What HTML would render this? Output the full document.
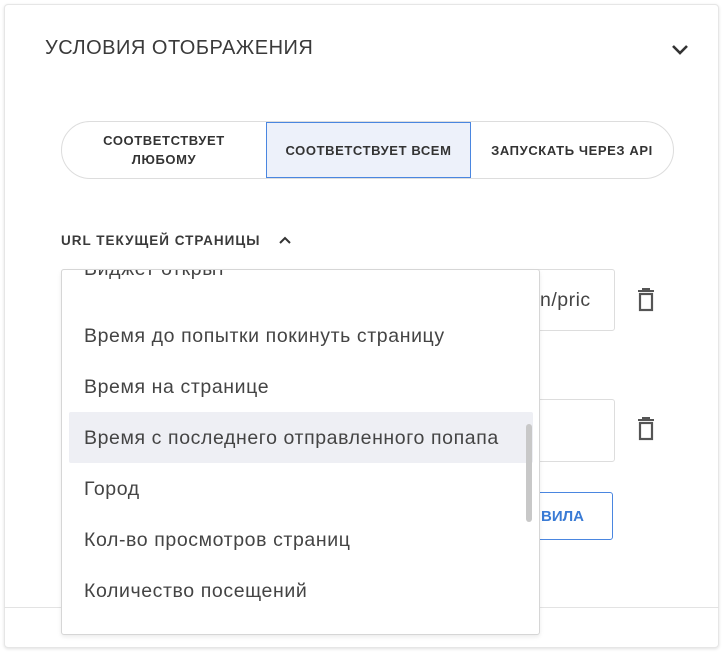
<!DOCTYPE html>
<html><head><meta charset="utf-8"><style>
*{box-sizing:border-box;margin:0;padding:0}
body{width:724px;height:653px;background:#fff;font-family:"Liberation Sans","DejaVu Sans",sans-serif;position:relative;overflow:hidden;color:#333}
.card{position:absolute;left:4px;top:4px;width:715px;height:644px;border:1px solid #e6e6e6;border-radius:4px;box-shadow:0 1px 3px rgba(0,0,0,.12);background:#fff}
.abs{position:absolute}
.title{left:45px;top:37px;font-size:20px;color:#3a3a3a;letter-spacing:.5px}
.seg{left:61px;top:121px;width:613px;height:58px;border:1px solid #ddd;border-radius:29px;overflow:hidden;display:flex}
.seg div{display:flex;align-items:center;justify-content:center;text-align:center;font-size:13px;font-weight:600;color:#333;line-height:19px;letter-spacing:.6px}
.label{left:61px;top:233px;font-size:13.5px;font-weight:bold;color:#3a3a3a;letter-spacing:1px}
.inp{border:1px solid #ddd;border-radius:3px;background:#fff}
.dd{left:61px;top:269px;width:479px;height:366px;border:1px solid #d6d6d6;border-radius:3px;background:#fff;overflow:hidden;box-shadow:0 2px 4px rgba(0,0,0,.08)}
.it{position:absolute;left:22px;font-size:19.5px;color:#444;white-space:nowrap;letter-spacing:.6px}
</style></head><body>
<div class="card"></div>
<div class="abs" style="left:4px;top:607px;width:715px;height:1px;background:#e3e3e3"></div>
<div class="abs title">УСЛОВИЯ ОТОБРАЖЕНИЯ</div>
<svg class="abs" style="left:670px;top:43px" width="20" height="14" viewBox="0 0 20 14"><path d="M3 3l7 7 7-7" fill="none" stroke="#333" stroke-width="2.6"/></svg>
<div class="abs seg">
<div style="width:204px">СООТВЕТСТВУЕТ<br>ЛЮБОМУ</div>
<div style="width:205px;background:#edf1fa;border:1px solid #4a86e0">СООТВЕТСТВУЕТ ВСЕМ</div>
<div style="flex:1">ЗАПУСКАТЬ ЧЕРЕЗ API</div>
</div>
<div class="abs label">URL ТЕКУЩЕЙ СТРАНИЦЫ</div>
<svg class="abs" style="left:278px;top:235px" width="14" height="10" viewBox="0 0 14 10"><path d="M2 8l5-5 5 5" fill="none" stroke="#333" stroke-width="2"/></svg>
<div class="abs inp" style="left:61px;top:269px;width:554px;height:62px"></div>
<div class="abs" style="left:540px;top:289px;font-size:19.5px;color:#444;letter-spacing:.5px">n/pric</div>
<div class="abs inp" style="left:61px;top:399px;width:554px;height:63px"></div>
<div class="abs" style="left:500px;top:492px;width:113px;height:48px;border:1px solid #4a86e0;border-radius:3px;color:#3a7bd5;font-size:15px;font-weight:bold;padding:15px 0 0 40px">ВИЛА</div>
<svg class="abs" style="left:636px;top:287px" width="20" height="26" viewBox="0 0 20 26"><path d="M2 4h16M7 4V2h6v2" fill="none" stroke="#555" stroke-width="2"/><rect x="4" y="7" width="12" height="16" fill="none" stroke="#555" stroke-width="2.2"/></svg>
<svg class="abs" style="left:636px;top:416px" width="20" height="26" viewBox="0 0 20 26"><path d="M2 4h16M7 4V2h6v2" fill="none" stroke="#555" stroke-width="2"/><rect x="4" y="7" width="12" height="16" fill="none" stroke="#555" stroke-width="2.2"/></svg>
<div class="abs dd">
<div class="it" style="top:-12px">Виджет открыт</div>
<div class="it" style="top:55px">Время до попытки покинуть страницу</div>
<div class="it" style="top:106px">Время на странице</div>
<div class="abs" style="left:7px;top:142px;width:464px;height:51px;background:#eeeff4;border-radius:2px"></div>
<div class="it" style="top:157px">Время с последнего отправленного попапа</div>
<div class="it" style="top:208px">Город</div>
<div class="it" style="top:259px">Кол-во просмотров страниц</div>
<div class="it" style="top:310px">Количество посещений</div>
<div class="abs" style="left:464px;top:154px;width:6px;height:98px;background:#c8c8c8;border-radius:3px"></div>
</div>
</body></html>
